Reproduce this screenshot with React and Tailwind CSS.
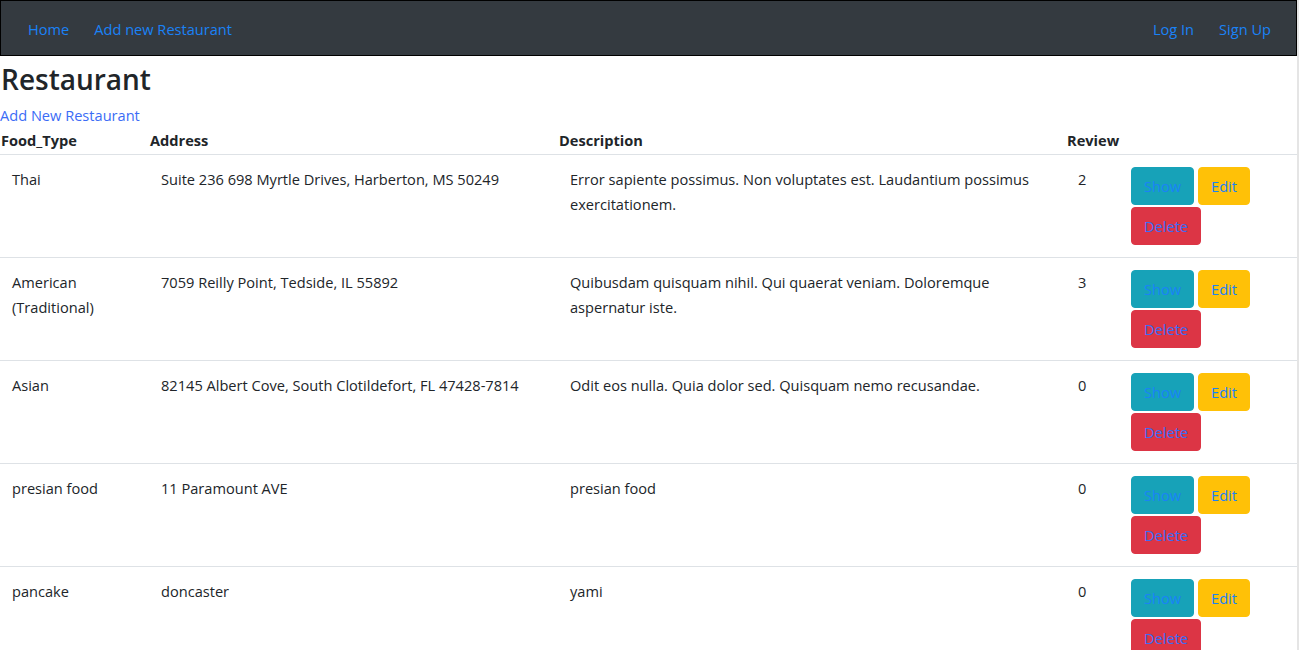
import React from "react";

const rows = [
  ["Thai", "Suite 236 698 Myrtle Drives, Harberton, MS 50249", "Error sapiente possimus. Non voluptates est. Laudantium possimus exercitationem.", "2"],
  ["American (Traditional)", "7059 Reilly Point, Tedside, IL 55892", "Quibusdam quisquam nihil. Qui quaerat veniam. Doloremque aspernatur iste.", "3"],
  ["Asian", "82145 Albert Cove, South Clotildefort, FL 47428-7814", "Odit eos nulla. Quia dolor sed. Quisquam nemo recusandae.", "0"],
  ["presian food", "11 Paramount AVE", "presian food", "0"],
  ["pancake", "doncaster", "yami", "0"],
];

const cols = "grid grid-cols-[149px_409px_508px_53px_179px]";

export default function App() {
  return (
    <div className="w-[1300px] h-[650px] overflow-hidden bg-white text-[#212529] font-['Open_Sans',sans-serif]">
      <div className="w-[1299px] border-r-2 border-[#e5e5e5] min-h-[650px]">
        <nav className="h-[56px] bg-[#343a40] border border-black flex items-center justify-between pl-[19px] pr-[17px] pt-[3px] text-[14.6px]">
          <div className="flex">
            <a className="px-2 text-[#1a82f7]">Home</a>
            <a className="px-2 ml-[9px] text-[#1a82f7]">Add new Restaurant</a>
          </div>
          <div className="flex">
            <a className="px-2 text-[#1a82f7]">Log In</a>
            <a className="px-2 ml-[9px] text-[#1a82f7]">Sign Up</a>
          </div>
        </nav>
        <h1 className="text-[28px] font-semibold leading-[47px] ml-[1px]">Restaurant</h1>
        <a className="block text-[14.6px] leading-[24px] text-[#3b6cf6]">Add New Restaurant</a>
        <div className={`${cols} text-[14.6px] font-bold leading-[27px] border-b border-[#dee2e6] pl-[1px]`}>
          <div>Food_Type</div>
          <div>Address</div>
          <div>Description</div>
          <div>Review</div>
          <div></div>
        </div>
        {rows.map((r, i) => (
          <div key={i} className={`${cols} text-[14.6px] leading-[25px] border-b border-[#dee2e6]`}>
            <div className="p-3">{r[0]}</div>
            <div className="p-3">{r[1]}</div>
            <div className="p-3">{r[2]}</div>
            <div className="p-3">{r[3]}</div>
            <div className="p-3 flex flex-wrap gap-x-1 gap-y-[2px] content-start">
              <span className="h-[38px] px-3 rounded bg-[#17a2b8] border border-[#17a2b8] flex items-center text-[#1a82f7]">Show</span>
              <span className="h-[38px] px-3 rounded bg-[#ffc107] border border-[#ffc107] flex items-center text-[#1a82f7]">Edit</span>
              <span className="h-[38px] px-3 rounded bg-[#dc3545] border border-[#dc3545] flex items-center text-[#3b6cf6]">Delete</span>
            </div>
          </div>
        ))}
      </div>
    </div>
  );
}
